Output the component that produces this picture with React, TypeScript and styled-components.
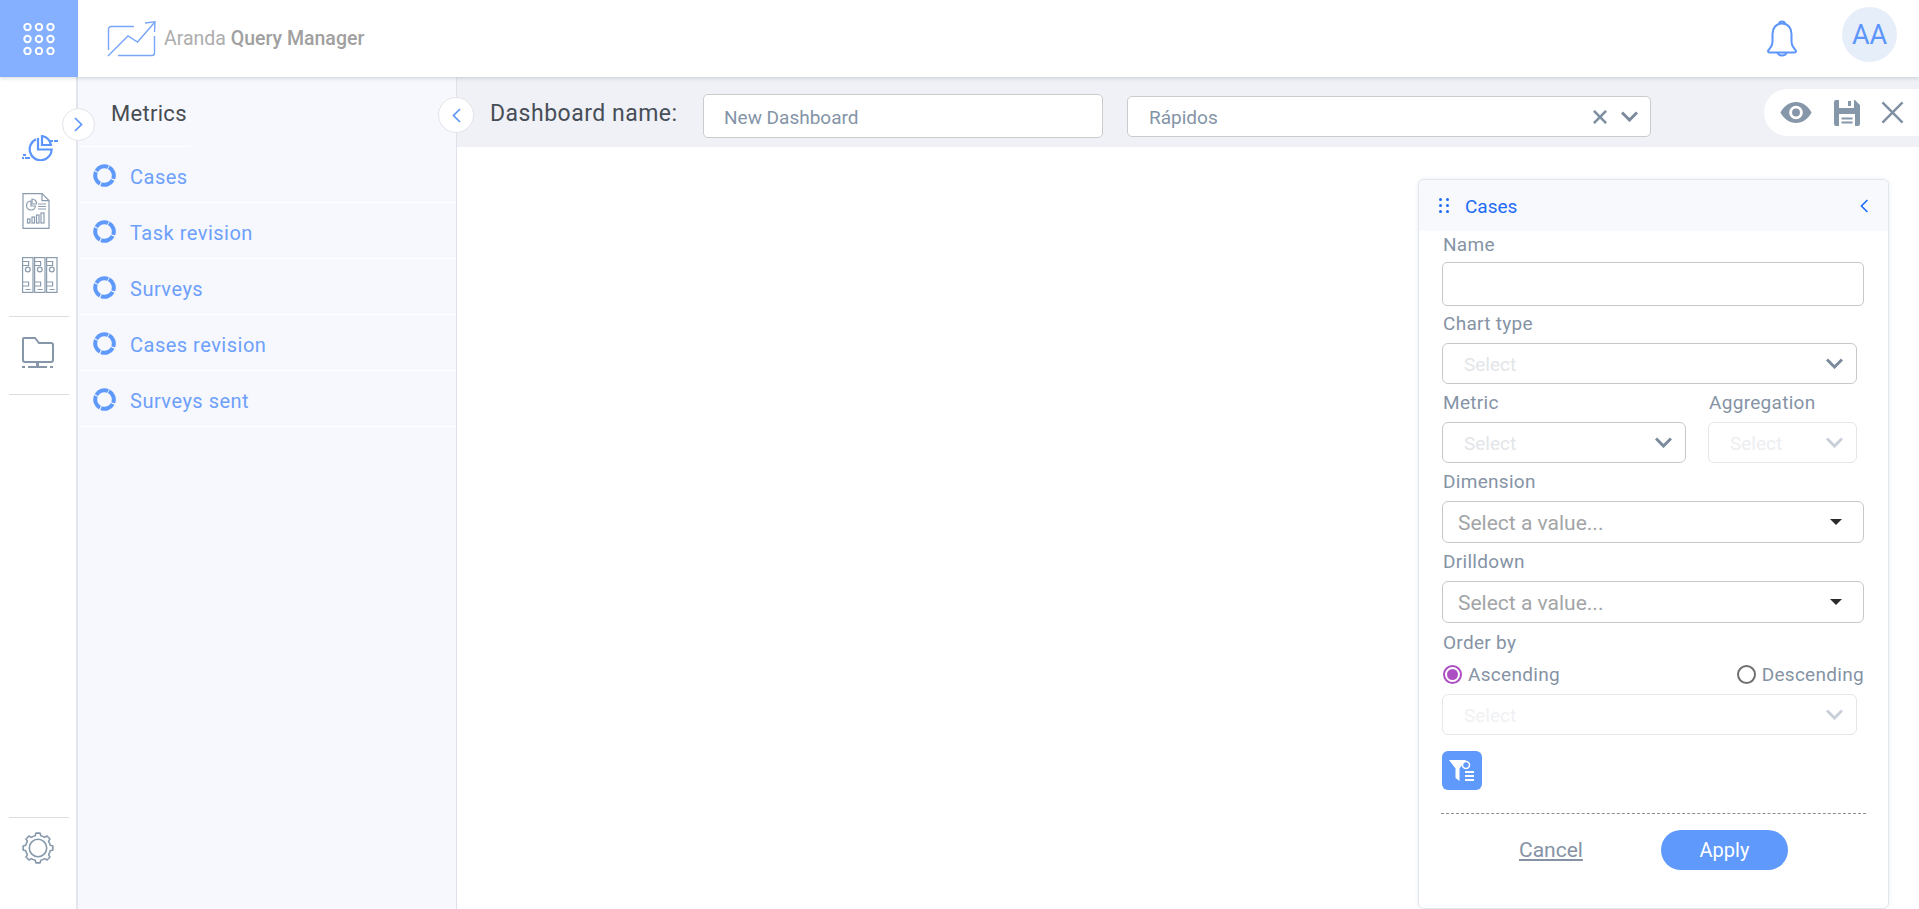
import { FC } from 'react'
import styled, { createGlobalStyle } from 'styled-components'

const GlobalStyle = createGlobalStyle`
  html, body {
    margin: 0;
    height: 100%;
    overflow: hidden;
    background: #fff;
    font-family: Roboto, 'Noto Sans', sans-serif;
  }
  * { box-sizing: border-box; }
`

const Page = styled.div`
  width: 1919px;
  height: 909px;
  display: flex;
  flex-direction: column;
  overflow: hidden;
`

const Header = styled.header`
  height: 77px;
  flex: none;
  display: flex;
  align-items: center;
  background: #fff;
  box-shadow: 0 1px 4px rgba(60, 70, 90, 0.22);
  position: relative;
  z-index: 3;
`

const Launcher = styled.div`
  width: 78px;
  height: 77px;
  background: #84b0ff;
  display: flex;
  align-items: center;
  justify-content: center;
`

const Brand = styled.div`
  display: flex;
  align-items: center;
  gap: 7px;
  margin-left: 29px;
`

const BrandName = styled.span`
  font-size: 19.5px;
  color: #adadad;
  b {
    font-weight: 500;
    color: #a0a0a0;
  }
`

const HeaderRight = styled.div`
  margin-left: auto;
  margin-right: 22px;
  display: flex;
  align-items: center;
  gap: 44px;
`

const BellWrap = styled.div`
  display: flex;
`

const Avatar = styled.div`
  width: 55px;
  height: 55px;
  margin-top: -8px;
  border-radius: 50%;
  background: #e6eefa;
  color: #5c95fb;
  font-size: 27px;
  display: flex;
  align-items: center;
  justify-content: center;
`

const Body = styled.div`
  flex: 1;
  display: flex;
  min-height: 0;
`

const Rail = styled.nav`
  width: 78px;
  flex: none;
  display: flex;
  flex-direction: column;
  align-items: flex-start;
  padding: 58px 0 45px 9px;
  border-right: 2px solid #e3e5ec;
  background: #fff;
`

const RailIcon = styled.div<{ $top: number }>`
  margin: ${p => p.$top}px 0 0 13px;
  display: flex;
`

const RailLine = styled.hr<{ $top?: number }>`
  width: 60px;
  margin: ${p => (p.$top === undefined ? 'auto' : `${p.$top}px`)} 0 0 0;
  border: 0;
  border-top: 1px solid #dedede;
`

const MetricsPanel = styled.aside`
  width: 379px;
  flex: none;
  position: relative;
  background: #f7f8fd;
  border-right: 1px solid #dfe2ea;
`

const PanelTitle = styled.h2`
  margin: 0;
  width: 112px;
  height: 70px;
  box-sizing: border-box;
  padding-left: 33px;
  font-size: 22px;
  font-weight: 400;
  letter-spacing: 0.3px;
  color: #474c52;
  line-height: 74px;
  white-space: nowrap;
  border-bottom: 1px solid #fff;
`

const MetricList = styled.ul`
  margin: 0;
  padding: 0;
  list-style: none;
`

const MetricRow = styled.li`
  height: 56px;
  display: flex;
  align-items: center;
  gap: 14px;
  padding: 2px 0 0 15px;
  font-size: 20px;
  letter-spacing: 0.5px;
  color: #6da0fb;
  border-bottom: 1px solid #fff;
`

const MetricName = styled.span`
  padding-top: 2px;
`

const RoundToggle = styled.button<{ $size: number; $side: 'left' | 'right'; $top: number }>`
  position: absolute;
  top: ${p => p.$top}px;
  ${p => p.$side}: ${p => -p.$size / 2}px;
  width: ${p => p.$size}px;
  height: ${p => p.$size}px;
  padding: 0;
  border-radius: 50%;
  border: 1px solid #e2e4ea;
  background: #fff;
  display: flex;
  align-items: center;
  justify-content: center;
  z-index: 2;
`

const Main = styled.main`
  flex: 1;
  min-width: 0;
  display: flex;
  flex-direction: column;
`

const Toolbar = styled.div`
  height: 70px;
  flex: none;
  display: flex;
  align-items: center;
  background: #eff1f6;
  padding-left: 33px;
`

const ToolbarLabel = styled.label`
  font-size: 23px;
  letter-spacing: 0.5px;
  color: #474e57;
  width: 213px;
  flex: none;
  margin-top: 2px;
  white-space: nowrap;
`

const NameInput = styled.input`
  width: 400px;
  height: 44px;
  flex: none;
  margin-top: 8px;
  padding: 2px 20px 0;
  border: 1px solid #cbcbcb;
  border-radius: 5px;
  background: #fff;
  font: inherit;
  font-size: 19px;
  outline: 0;
  &::placeholder {
    color: #8494a7;
    opacity: 1;
  }
`

const CategorySelect = styled.div`
  width: 524px;
  height: 41px;
  flex: none;
  margin: 9px 0 0 24px;
  padding: 0 12px 0 21px;
  display: flex;
  align-items: center;
  gap: 14px;
  border: 1px solid #cbcbcb;
  border-radius: 5px;
  background: #fff;
  font-size: 19px;
  color: #8494a7;
  span {
    margin-right: auto;
    padding-top: 2px;
  }
`

const ActionPill = styled.div`
  margin: 1px 0 0 auto;
  width: 155px;
  height: 47px;
  flex: none;
  display: flex;
  align-items: center;
  gap: 21px;
  padding-left: 15px;
  background: #fff;
  border-radius: 24px 0 0 24px;
`

const Canvas = styled.div`
  flex: 1;
  min-height: 0;
  display: flex;
  justify-content: flex-end;
  padding: 32px 30px 0 0;
  background: #fff;
`

const Card = styled.section`
  width: 471px;
  height: 730px;
  flex: none;
  border: 1px solid #e2e5ec;
  border-radius: 6px;
  box-shadow: 0 0 5px rgba(120, 140, 190, 0.14);
  background: #fff;
`

const CardHeader = styled.div`
  height: 51px;
  display: flex;
  align-items: center;
  gap: 16px;
  padding: 0 20px;
  background: #f7f9fd;
  border-radius: 6px 6px 0 0;
  font-size: 19px;
  color: #1e6bf5;
  span {
    margin-right: auto;
    padding-top: 2px;
  }
`

const CardBody = styled.form`
  padding: 0 24px 0 23px;
`

const FieldLabel = styled.div<{ $height?: number; $lift?: number }>`
  height: ${p => p.$height ?? 38}px;
  display: flex;
  align-items: center;
  padding: 0 0 ${p => p.$lift ?? 2}px 1px;
  font-size: 19px;
  letter-spacing: 0.3px;
  color: #8593a5;
`

const TextField = styled.input`
  display: block;
  width: 100%;
  height: 44px;
  border: 1px solid #c8c8c8;
  border-radius: 5px;
  background: #fff;
  outline: 0;
`

const Select = styled.div<{ $width?: number; $tone?: 'normal' | 'faint' | 'fainter' }>`
  width: ${p => (p.$width ? `${p.$width}px` : '100%')};
  height: 41px;
  display: flex;
  align-items: center;
  justify-content: space-between;
  padding: 2px 13px 0 21px;
  border: 1px solid ${p => (p.$tone && p.$tone !== 'normal' ? '#e6e6e6' : '#c8c8c8')};
  border-radius: 6px;
  font-size: 19px;
  color: ${p => (p.$tone === 'fainter' ? '#f0f1f3' : p.$tone === 'faint' ? '#eceef1' : '#e2e5e9')};
  background: #fff;
  svg {
    margin-top: -3px;
  }
`

const ValueSelect = styled.div`
  height: 42px;
  display: flex;
  align-items: center;
  justify-content: space-between;
  padding: 2px 21px 0 15px;
  border: 1px solid #c8c8c8;
  border-radius: 6px;
  font-size: 21px;
  color: #a3a5a7;
  background: #fff;
`

const Caret = styled.i`
  width: 0;
  height: 0;
  margin-top: -3px;
  border-left: 6px solid transparent;
  border-right: 6px solid transparent;
  border-top: 6px solid #2b2b2b;
`

const TwoColumns = styled.div`
  display: grid;
  grid-template-columns: 244px 149px;
  column-gap: 22px;
`

const RadioRow = styled.div`
  height: 33px;
  display: flex;
  align-items: center;
  justify-content: space-between;
  padding: 0 0 6px 1px;
`

const RadioOption = styled.label`
  display: flex;
  align-items: center;
  gap: 6px;
  font-size: 19px;
  letter-spacing: 0.3px;
  color: #8593a5;
`

const RadioDot = styled.span<{ $on?: boolean }>`
  width: 19px;
  height: 19px;
  border-radius: 50%;
  border: 2px solid ${p => (p.$on ? '#ac4fc2' : '#6f6f6f')};
  display: flex;
  align-items: center;
  justify-content: center;
  &::after {
    content: '';
    width: 11px;
    height: 11px;
    border-radius: 50%;
    background: ${p => (p.$on ? '#ac4fc2' : 'transparent')};
  }
`

const FilterButton = styled.button`
  display: flex;
  align-items: center;
  justify-content: center;
  width: 40px;
  height: 39px;
  margin-top: 16px;
  padding: 0;
  border: 0;
  border-radius: 6px;
  background: #5e99fb;
`

const DashedLine = styled.hr`
  margin: 23px -2px 0 -1px;
  border: 0;
  border-top: 1px dashed #8a8f96;
`

const CardActions = styled.div`
  display: flex;
  align-items: center;
  margin-top: 16px;
  padding-left: 77px;
  gap: 78px;
`

const CancelLink = styled.a`
  font-size: 21px;
  color: #8593a5;
  text-decoration: underline;
`

const ApplyButton = styled.button`
  width: 127px;
  height: 40px;
  border: 0;
  border-radius: 20px;
  background: #5e99fb;
  color: #fff;
  font: inherit;
  font-size: 20px;
`

const AppsIcon: FC = () => (
  <svg width="32" height="32" viewBox="0 0 32 32" fill="none" stroke="#fff" strokeWidth="2">
    {[4, 16, 28].map(y =>
      [4.5, 16, 27.5].map(x => <circle key={`${x}-${y}`} cx={x} cy={y} r="3.2" />)
    )}
  </svg>
)

const LogoIcon: FC = () => (
  <svg width="50" height="36" viewBox="0 0 50 36" fill="none" stroke="#79a6f9" strokeWidth="1.4">
    <path d="M27 5.5H4a2.5 2.5 0 0 0-2.5 2.5v21" />
    <path d="M11 34.500h34a2.500 2.500 0 0 0 2.500-2.500V15" />
    <path d="M1 35 21 15l9.500 6L47.500 1.500" />
    <path d="M38 2l10-1.200L47.500 11" />
  </svg>
)

const BellIcon: FC = () => (
  <svg width="32" height="40" viewBox="0 0 32 40" fill="none" stroke="#5c95fb" strokeWidth="2" strokeLinejoin="round">
    <path d="M13 5.500c0-4 6-4 6 0" />
    <path d="M16 4.500c-6 0-9.500 4.500-9.500 10.500v8c0 4-2 5.500-4 8-1 1.500 0 2.500 1.500 2.500h24c1.500 0 2.500-1 1.500-2.500-2-2.500-4-4-4-8v-8c0-6-3.500-10.500-9.500-10.500z" />
    <path d="M11.500 33.500c1 4 8 4 9 0" />
  </svg>
)

const Chevron: FC<{ dir: 'left' | 'right'; color: string; size?: number }> = ({ dir, color, size = 15 }) => (
  <svg width={size * 0.6} height={size} viewBox="0 0 9 15" fill="none" stroke={color} strokeWidth="1.700">
    <path d={dir === 'left' ? 'M8 1 1.500 7.500 8 14' : 'M1 1l6.500 6.500L1 14'} />
  </svg>
)

const ChevronDown: FC<{ color?: string }> = ({ color = '#7b8a9c' }) => (
  <svg width="17" height="11" viewBox="0 0 17 11" fill="none" stroke={color} strokeWidth="3">
    <path d="M1 1.500l7.500 7.500L16 1.500" />
  </svg>
)

const ClearIcon: FC<{ size: number; weight: number }> = ({ size, weight }) => (
  <svg width={size} height={size} viewBox="0 0 16 16" fill="none" stroke="#7f8fa1" strokeWidth={weight}>
    <path d="M1 1l14 14M15 1 1 15" />
  </svg>
)

const EyeIcon: FC = () => (
  <svg width="34" height="21" viewBox="0 0 34 23" fill="#8697aa">
    <path fillRule="evenodd" d="M0 11.500C4 4 10 0 17 0s13 4 17 11.500C30 19 24 23 17 23S4 19 0 11.500zM17 4a7.500 7.500 0 1 0 0 15 7.500 7.500 0 0 0 0-15z" />
    <circle cx="17" cy="11.500" r="4.300" />
  </svg>
)

const SaveIcon: FC = () => (
  <svg width="26" height="26" viewBox="0 0 26 26" fill="#8697aa">
    <path fillRule="evenodd" d="M2 0h3v8h15V0h1l5 5v19a2 2 0 0 1-2 2H2a2 2 0 0 1-2-2V2a2 2 0 0 1 2-2zm3 14v12h16V14H5z" />
    <rect x="14" y="1" width="3" height="5" />
    <rect x="7.500" y="17.500" width="11" height="2" />
    <rect x="7.500" y="21.500" width="11" height="2" />
  </svg>
)

const DonutIcon: FC = () => (
  <svg width="23" height="23" viewBox="0 0 23 23" fill="none" stroke="#5e99fb" strokeWidth="4">
    <circle cx="11.500" cy="11.500" r="9.300" strokeDasharray="13.400 1.200" transform="rotate(-62 11.500 11.500)" />
  </svg>
)

const PieIcon: FC = () => (
  <svg width="37" height="26" viewBox="0 0 37 26" fill="none" stroke="#5c95fb" strokeWidth="2.200">
    <path d="M14 4.300a11 11 0 1 0 15.700 10.200H16V3" />
    <path d="M20 1v9h9C28 5 25 2 20 1z" />
    <path d="M28 6h3M32 6h4M0 23h2M3 23h5M1 20h3" />
  </svg>
)

const ReportIcon: FC = () => (
  <svg width="28" height="36" viewBox="0 0 28 36" fill="none" stroke="#8b9bae" strokeWidth="1.200">
    <path d="M1 .6h19l7 7V35.400H1z" />
    <path d="M20 .6v7h7" />
    <path d="M9 8a4.500 4.500 0 1 0 4.500 5H9z" />
    <path d="M10 6v5h4.500a4.500 4.500 0 0 0-4.500-5z" />
    <path d="M16 11h8M16 13.500h8M16 16h8" />
    <rect x="5.500" y="26" width="2.500" height="4" />
    <rect x="10" y="24" width="2.500" height="6" />
    <rect x="14.500" y="22" width="2.500" height="8" />
    <rect x="19" y="20" width="3" height="10" />
  </svg>
)

const BindersIcon: FC = () => (
  <svg width="36" height="36" viewBox="0 0 36 36" fill="none" stroke="#8b9bae" strokeWidth="1.200">
    {[0.6, 12.6, 24.6].map(x => (
      <g key={x}>
        <rect x={x} y="0.600" width="10.400" height="34.800" />
        <path d={`M${x} 4.500h6v4h-6M${x} 25h6v4h-6M${x + 3} 32.500h5`} />
        <circle cx={x + 5.2} cy="12.500" r="2.400" />
      </g>
    ))}
  </svg>
)

const FolderIcon: FC = () => (
  <svg width="32" height="32" viewBox="0 0 32 32" fill="none" stroke="#8697aa" strokeWidth="2">
    <path d="M1 23V2a1 1 0 0 1 1-1h11l4 5h12a2 2 0 0 1 2 2v15a2 2 0 0 1-2 2H3a2 2 0 0 1-2-2z" />
    <path d="M15.500 25v5" strokeWidth="3" />
    <path d="M0 30h3M6 30h19M28 30h3" />
  </svg>
)

const gearPath = (): string => {
  const point = (deg: number, r: number) => {
    const a = (deg * Math.PI) / 180
    return `${(16 + r * Math.cos(a)).toFixed(2)} ${(16 + r * Math.sin(a)).toFixed(2)}`
  }
  const parts: string[] = []
  for (let i = 0; i < 8; i++) {
    const a = i * 45
    parts.push(`${i === 0 ? 'M' : 'A12.500 12.500 0 0 1'} ${point(a - 13, 12.5)}`)
    parts.push(`L${point(a - 8, 15)}`)
    parts.push(`L${point(a + 8, 15)}`)
    parts.push(`L${point(a + 13, 12.5)}`)
  }
  parts.push(`A12.500 12.500 0 0 1 ${point(-13, 12.5)}Z`)
  return parts.join(' ')
}

const GearIcon: FC = () => (
  <svg width="32" height="32" viewBox="0 0 32 32" fill="none" stroke="#8697aa" strokeWidth="1.600" strokeLinejoin="round">
    <circle cx="16" cy="16" r="8.700" />
    <path d={gearPath()} />
  </svg>
)

const FilterIcon: FC = () => (
  <svg width="26" height="22" viewBox="0 0 26 22" fill="#fff">
    <path d="M0 0h17l-6.500 8.500V21l-4-3V8.500z" />
    <circle cx="17" cy="5" r="3.500" fill="none" stroke="#fff" strokeWidth="1.500" />
    <rect x="16" y="11" width="9" height="2" />
    <rect x="16" y="15" width="9" height="2" />
    <rect x="16" y="19" width="9" height="2" />
  </svg>
)

const DragIcon: FC = () => (
  <svg width="10" height="15" viewBox="0 0 10 15" fill="#1e6bf5">
    {[1.5, 7.5, 13.5].map(y =>
      [1.5, 8.5].map(x => <circle key={`${x}-${y}`} cx={x} cy={y} r="1.500" />)
    )}
  </svg>
)

const metrics = ['Cases', 'Task revision', 'Surveys', 'Cases revision', 'Surveys sent']

const App: FC = () => (
  <Page>
    <GlobalStyle />
    <Header>
      <Launcher>
        <AppsIcon />
      </Launcher>
      <Brand>
        <LogoIcon />
        <BrandName>
          Aranda <b>Query Manager</b>
        </BrandName>
      </Brand>
      <HeaderRight>
        <BellWrap>
          <BellIcon />
        </BellWrap>
        <Avatar>AA</Avatar>
      </HeaderRight>
    </Header>
    <Body>
      <Rail>
        <RailIcon $top={0}><PieIcon /></RailIcon>
        <RailIcon $top={32}><ReportIcon /></RailIcon>
        <RailIcon $top={28}><BindersIcon /></RailIcon>
        <RailLine $top={23} />
        <RailIcon $top={20}><FolderIcon /></RailIcon>
        <RailLine $top={25} />
        <RailLine />
        <RailIcon $top={14}><GearIcon /></RailIcon>
      </Rail>
      <MetricsPanel>
        <RoundToggle $size={33} $side="left" $top={31} type="button">
          <Chevron dir="right" color="#5c95fb" />
        </RoundToggle>
        <RoundToggle $size={36} $side="right" $top={20} type="button">
          <Chevron dir="left" color="#5c95fb" />
        </RoundToggle>
        <PanelTitle>Metrics</PanelTitle>
        <MetricList>
          {metrics.map(name => (
            <MetricRow key={name}>
              <DonutIcon />
              <MetricName>{name}</MetricName>
            </MetricRow>
          ))}
        </MetricList>
      </MetricsPanel>
      <Main>
        <Toolbar>
          <ToolbarLabel>Dashboard name:</ToolbarLabel>
          <NameInput placeholder="New Dashboard" />
          <CategorySelect>
            <span>Rápidos</span>
            <ClearIcon size={14} weight={3} />
            <ChevronDown />
          </CategorySelect>
          <ActionPill>
            <EyeIcon />
            <SaveIcon />
            <ClearIcon size={23} weight={1.7} />
          </ActionPill>
        </Toolbar>
        <Canvas>
          <Card>
            <CardHeader>
              <DragIcon />
              <span>Cases</span>
              <Chevron dir="left" color="#1e6bf5" size={14} />
            </CardHeader>
            <CardBody>
              <FieldLabel $height={31} $lift={4}>Name</FieldLabel>
              <TextField />
              <FieldLabel $height={37}>Chart type</FieldLabel>
              <Select $width={415}>
                Select
                <ChevronDown />
              </Select>
              <TwoColumns>
                <FieldLabel>Metric</FieldLabel>
                <FieldLabel>Aggregation</FieldLabel>
                <Select>
                  Select
                  <ChevronDown />
                </Select>
                <Select $tone="faint">
                  Select
                  <ChevronDown color="#c9d0da" />
                </Select>
              </TwoColumns>
              <FieldLabel>Dimension</FieldLabel>
              <ValueSelect>
                Select a value...
                <Caret />
              </ValueSelect>
              <FieldLabel>Drilldown</FieldLabel>
              <ValueSelect>
                Select a value...
                <Caret />
              </ValueSelect>
              <FieldLabel $lift={0}>Order by</FieldLabel>
              <RadioRow>
                <RadioOption>
                  <RadioDot $on />
                  Ascending
                </RadioOption>
                <RadioOption>
                  <RadioDot />
                  Descending
                </RadioOption>
              </RadioRow>
              <Select $width={415} $tone="fainter">
                Select
                <ChevronDown color="#c9d0da" />
              </Select>
              <FilterButton type="button">
                <FilterIcon />
              </FilterButton>
              <DashedLine />
              <CardActions>
                <CancelLink>Cancel</CancelLink>
                <ApplyButton type="button">Apply</ApplyButton>
              </CardActions>
            </CardBody>
          </Card>
        </Canvas>
      </Main>
    </Body>
  </Page>
)

export default App
